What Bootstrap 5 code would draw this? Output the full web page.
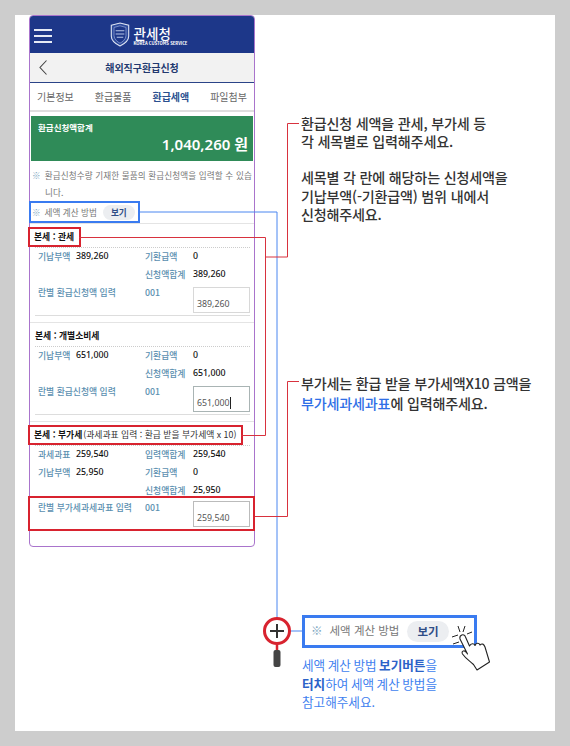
<!DOCTYPE html>
<html lang="ko">
<head>
  <meta charset="UTF-8">
  <title>해외직구환급신청 안내</title>
  <link href="https://cdn.jsdelivr.net/npm/bootstrap@5.3.3/dist/css/bootstrap.min.css" rel="stylesheet">
  <style>
    body {
      margin: 0;
      background: #cdcdcd;
      font-family: "Noto Sans CJK KR", "Noto Sans", sans-serif;
      width: 570px;
      height: 746px;
      overflow: hidden;
      position: relative;
    }

    .sheet {
      position: absolute;
      left: 15px;
      top: 15px;
      width: 540px;
      height: 716px;
      background: #fff;
    }

    /* phone */
    .phone {
      width: 226px;
      height: 532px;
      margin-left: 14px;
      border: 1px solid #a974cc;
      border-radius: 4px;
      flex: none;
    }
    .top-bar { height: 37px; background: #1d3789; color: #fff; position: relative; border-radius: 3px 3px 0 0; padding-left: 13px; }
    .burger { position: absolute; left: 4px; top: 13px; width: 18px; }
    .burger i { display: block; height: 1.5px; background: #e6ebf5; margin-bottom: 4.5px; }
    .logo-text { padding-top: 3px; }
    .logo-ko { font-size: 13.5px; line-height: 14px; font-weight: 500; }
    .logo-en { font-size: 4.2px; line-height: 6px; font-weight: 700; white-space: nowrap; }
    .sub-bar { height: 30px; background: #f2f2f2; border-bottom: 1px solid #2a4488; position: relative; font-size: 10px; font-weight: 700; color: #22396f; }
    .sub-bar svg { position: absolute; left: 8px; top: 6px; }
    .tab-row { height: 29px; font-size: 10px; color: #666; border-bottom: 2px solid #dedede; padding: 0 7px; }
    .tab-row b { color: #2a4f8f; font-weight: 700; }
    .total-box { margin: 4px 1px 0; height: 45px; background: #2f8b58; color: #fff; padding: 5px 5px 5px 7px; }
    .total-box p { margin: 0; font-size: 8.5px; line-height: 12px; font-weight: 700; }
    .total-box strong { display: block; text-align: right; font-size: 15px; line-height: 23px; font-weight: 600; font-family: "Noto Sans", "Noto Sans CJK KR", sans-serif; }
    .note { margin: 6px 0 0; padding: 0 1px 0 15px; text-indent: -13px; font-size: 8.6px; line-height: 17px; color: #777; letter-spacing: .1px; }
    .mark-sym { color: #7ea6c0; margin-right: 4px; }
    .blue-box { margin: 0 0 0 -1px; width: 111px; height: 22px; border: 2.5px solid #3a7bf0; background: #fff; font-size: 8.6px; color: #777; padding-left: 1px; position: relative; }
    .view-pill { background: #eceef1; color: #2f4d86; font-weight: 700; border-radius: 8px; padding: 0 8px; line-height: 15px; margin-left: 6px; font-size: 8.6px; }
    .tax-sec { border-top: 1px solid #e4e4e4; padding: 3px 4px 0 5px; }
    .tax-title { height: 20px; font-size: 8.8px; font-weight: 700; color: #111; }
    .tax-title span { font-weight: 400; color: #333; margin-left: 1px; }
    .red-box { border: 2.5px solid #d8232f; margin-left: -7px; padding: 0 5px 0 4px; width: fit-content; background: #fff; position: relative; }
    .tax-grid {
      display: grid;
      grid-template-columns: 38px 69px 48px 1fr;
      grid-auto-rows: 18px;
      align-items: center;
      font-size: 8.8px;
      border-top: 1px dotted #ccc;
      padding-left: 3px;
    }
    .tax-grid .lab { color: #5b8fb0; white-space: nowrap; font-size: 8.8px; font-weight: 500; }
    .tax-grid .val { color: #111; font-family: "Noto Sans", sans-serif; font-weight: 500; font-size: 8.8px; }
    .input-row {
      display: grid;
      grid-template-columns: 107px 48px 57px;
      font-size: 8.8px;
      font-weight: 500;
      color: #5b8fb0;
      height: 32px;
      padding-left: 3px;
      border-bottom: 1px solid #ddd;
      margin-bottom: 6px;
    }
    .input-row span { line-height: 18px; white-space: nowrap; }
    .amount-box { margin-top: 3px; height: 26px; border: 1px solid #d8d8d8; font-size: 8.8px; font-weight: 400; color: #555; padding: 9px 3px 0; line-height: 14px; font-family: "Noto Sans", sans-serif; }
    .amount-box span { line-height: 14px; }
    .amount-box.on { border-color: #a9b4b4; }
    .caret-bar { border-right: 1px solid #222; }
    .input-row.boxed { border: 2.5px solid #d8232f; height: 35px; margin: -4px -5px 0 -7px; padding-left: 8px; position: relative; background: #fff; }
    .input-row.boxed .amount-box { margin-top: 3px; border-color: #bbb; }
    .input-row.boxed > span { line-height: 17px; padding-top: 1px; }

    /* right side notes */
    .side { margin-left: 46px; width: 238px; flex: none; }
    .call-text { color: #333; font-size: 14.1px; font-weight: 500; line-height: 18.7px; margin: 0; white-space: nowrap; letter-spacing: -.2px; }
    .call-one { margin-top: 98.5px; }
    .call-two { margin-top: 17px; }
    .call-three { margin-top: 148.5px; line-height: 20.5px; }
    .call-three b { color: #2f6fe6; font-weight: 500; }
    .demo-box { width: 175px; height: 33px; margin: 201px 0 0 1px; border: 3px solid #3a7bf0; font-size: 11.5px; color: #777; padding-left: 6px; }
    .demo-box .mark-sym { margin-right: 7px; }
    .demo-box .view-pill { font-size: 11.5px; line-height: 21px; border-radius: 11px; padding: 0 10px; margin-left: 8px; }
    .demo-text { color: #3f7fef; font-size: 12.6px; line-height: 18.6px; margin: 8.5px 0 0 1px; white-space: nowrap; word-spacing: -1px; }
    .demo-text b { color: #2b62c8; font-weight: 700; }

    .overlay { position: absolute; left: 0; top: 0; pointer-events: none; }
  </style>
</head>
<body>

<div class="sheet d-flex">
  <!-- phone screen -->
  <div class="phone">
    <div class="top-bar d-flex align-items-center justify-content-center gap-1">
      <div class="burger"><i></i><i></i><i></i></div>
      <svg width="20" height="25" viewBox="1 0 18 23">
        <path d="M2 3 L10 1 L18 3 V13 C18 18 13 20.500 10 22 C7 20.500 2 18 2 13 Z" fill="#2d4a9c" stroke="#dfe5f3" stroke-width="1"/>
        <path d="M4.500 5 L10 3.500 L15.500 5 V12.500 C15.500 16 12 18.500 10 19.500 C8 18.500 4.500 16 4.500 12.500 Z" fill="#1d3789" stroke="#8fa3d6" stroke-width=".7"/>
        <path d="M6 8 H14 M6 11 H14 M7 14 H13" stroke="#b8c6e8" stroke-width="1"/>
      </svg>
      <div class="logo-text">
        <div class="logo-ko">관세청</div>
        <div class="logo-en">KOREA CUSTOMS SERVICE</div>
      </div>
    </div>
    <div class="sub-bar d-flex align-items-center justify-content-center">
      <svg width="10" height="17" viewBox="0 0 10 17"><path d="M8.500 1.500 L2 8.500 L8.500 15.500" fill="none" stroke="#444" stroke-width="1.100"/></svg>
      해외직구환급신청
    </div>
    <div class="tab-row d-flex align-items-center justify-content-between">
      <span>기본정보</span><span>환급물품</span><b>환급세액</b><span>파일첨부</span>
    </div>
    <div class="total-box">
      <p>환급신청액합계</p>
      <strong>1,040,260 원</strong>
    </div>
    <p class="note"><span class="mark-sym">※</span>환급신청수량 기재한 물품의 환급신청액을 입력할 수 있습니다.</p>
    <div class="blue-box d-flex align-items-center">
      <span class="mark-sym">※</span>세액 계산 방법<span class="view-pill">보기</span>
    </div>

    <div class="tax-sec">
      <div class="tax-title red-box d-flex align-items-center">본세 : 관세</div>
      <div class="tax-grid">
        <span class="lab">기납부액</span><span class="val">389,260</span><span class="lab">기환급액</span><span class="val">0</span>
        <span></span><span></span><span class="lab">신청액합계</span><span class="val">389,260</span>
      </div>
      <div class="input-row">
        <span>란별 환급신청액 입력</span><span>001</span><div class="amount-box">389,260</div>
      </div>
    </div>

    <div class="tax-sec">
      <div class="tax-title d-flex align-items-center">본세 : 개별소비세</div>
      <div class="tax-grid">
        <span class="lab">기납부액</span><span class="val">651,000</span><span class="lab">기환급액</span><span class="val">0</span>
        <span></span><span></span><span class="lab">신청액합계</span><span class="val">651,000</span>
      </div>
      <div class="input-row">
        <span>란별 환급신청액 입력</span><span>001</span><div class="amount-box on"><span class="caret-bar">651,000</span></div>
      </div>
    </div>

    <div class="tax-sec">
      <div class="tax-title red-box d-flex align-items-center">본세 : 부가세<span>(과세과표 입력 : 환급 받을 부가세액 x 10)</span></div>
      <div class="tax-grid">
        <span class="lab">과세과표</span><span class="val">259,540</span><span class="lab">입력액합계</span><span class="val">259,540</span>
        <span class="lab">기납부액</span><span class="val">25,950</span><span class="lab">기환급액</span><span class="val">0</span>
        <span></span><span></span><span class="lab">신청액합계</span><span class="val">25,950</span>
      </div>
      <div class="input-row boxed">
        <span>란별 부가세과세과표 입력</span><span>001</span><div class="amount-box">259,540</div>
      </div>
    </div>
  </div>

  <!-- notes on the right -->
  <div class="side">
    <p class="call-text call-one">환급신청 세액을 관세, 부가세 등<br>각 세목별로 입력해주세요.</p>
    <p class="call-text call-two">세목별 각 란에 해당하는 신청세액을<br>기납부액(-기환급액) 범위 내에서<br>신청해주세요.</p>
    <p class="call-text call-three">부가세는 환급 받을 부가세액X10 금액을<br><b>부가세과세과표</b>에 입력해주세요.</p>
    <div class="demo-box d-flex align-items-center">
      <span class="mark-sym">※</span>세액 계산 방법<span class="view-pill">보기</span>
    </div>
    <p class="demo-text">세액 계산 방법 <b>보기버튼</b>을<br><b>터치</b>하여 세액 계산 방법을<br>참고해주세요.</p>
  </div>
</div>

<!-- connector lines, magnifier and hand lie over everything -->
<svg class="overlay" width="570" height="746" viewBox="0 0 570 746">
  <path d="M140 212 H277 V620 M289 631 H302" fill="none" stroke="#4a86f0" stroke-width="1"/>
  <path d="M79 237.500 H265.500 V435.500 H241 M265.500 257 H287.500 M287.500 257 V123.500 H299" fill="none" stroke="#d8323e" stroke-width="1"/>
  <path d="M255 516.500 H287.500 V381.500 H299" fill="none" stroke="#d8323e" stroke-width="1"/>
  <circle cx="277" cy="631" r="12.500" fill="#fff" stroke="#d8232f" stroke-width="3"/>
  <path d="M270 631 H284 M277 624 V638" stroke="#333" stroke-width="2"/>
  <path d="M277 644 V651" stroke="#d8232f" stroke-width="2.500"/>
  <rect x="273.500" y="650" width="7" height="17" rx="2" fill="#444"/>
  <path d="M458 626 L460 632 M465 626 L463 632 M472 632 L467 634 M452 637 L458 635 M453 644 L459 642" stroke="#222" stroke-width="1" fill="none"/>
  <path d="M460 639 C459 635 464 633 465.500 637 L469.500 646 C471 643 474 643 475 645.500 C476 642.500 479 642.500 480 645 C482 643 484 644 485 647 L489.500 662 L477 670 L473.500 664.500 C470 661 466 659 462.500 654 C461 651 464 650 466 652 L467.500 654 Z" fill="#fff" stroke="#222" stroke-width="1.100" stroke-linejoin="round"/>
</svg>

<script src="https://cdn.jsdelivr.net/npm/bootstrap@5.3.3/dist/js/bootstrap.bundle.min.js"></script>
</body>
</html>
